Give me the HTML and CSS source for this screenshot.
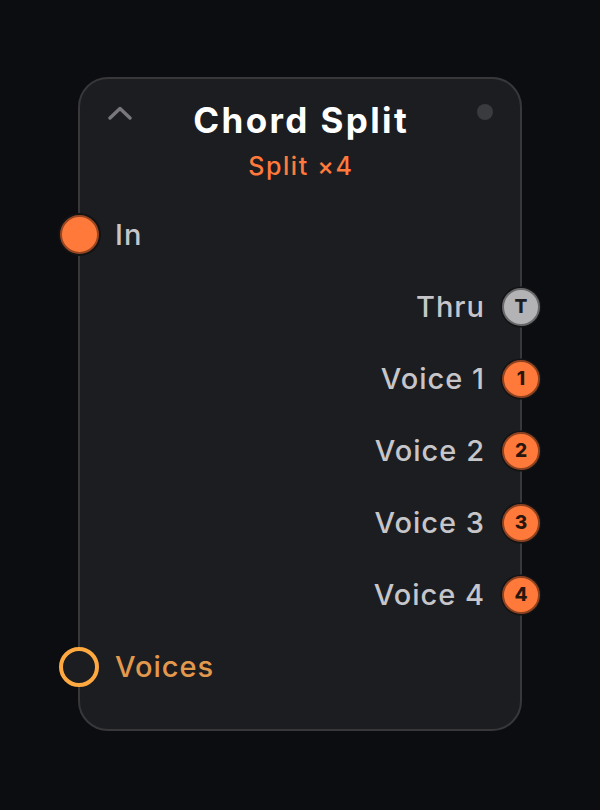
FILE: index.html
```html
<!DOCTYPE html>
<html>
<head>
<meta charset="utf-8">
<link rel="stylesheet" href="styles.css">
</head>
<body>
<div class="card">
  <div class="header">
    <div class="top">
      <svg class="chevron" viewBox="0 0 24 14" width="24" height="14"><polyline points="2,12 12,2.5 22,12" fill="none" stroke="#78787c" stroke-width="3.4" stroke-linecap="round" stroke-linejoin="round"/></svg>
      <div class="title">Chord Split</div>
      <div class="dot"></div>
    </div>
    <div class="subtitle">Split ×4</div>
  </div>
  <div class="ports">
    <div class="row left"><span class="port in"></span><span class="label">In</span></div>
    <div class="row right"><span class="label">Thru</span><span class="port thru">T</span></div>
    <div class="row right"><span class="label">Voice 1</span><span class="port voice">1</span></div>
    <div class="row right"><span class="label">Voice 2</span><span class="port voice">2</span></div>
    <div class="row right"><span class="label">Voice 3</span><span class="port voice">3</span></div>
    <div class="row right"><span class="label">Voice 4</span><span class="port voice">4</span></div>
    <div class="row left"><span class="port hollow"></span><span class="label voices">Voices</span></div>
  </div>
</div>
</body>
</html>
```
FILE: styles.css
```css
html, body {
  margin: 0;
  padding: 0;
  background: #0c0d10;
}
body {
  width: 600px;
  height: 810px;
  padding: 77px 0 0 78px;
  box-sizing: border-box;
  font-family: Inter, "Noto Sans", sans-serif;
}
.card {
  box-sizing: border-box;
  width: 444px;
  height: 654px;
  background: #1c1d20;
  border: 2px solid #38383b;
  border-radius: 30px;
  padding-bottom: 26px;
}
.header {
  height: 119.5px;
  padding: 21px 26px 0 26px;
  box-sizing: border-box;
}
.top {
  display: grid;
  grid-template-columns: 1fr auto 1fr;
  align-items: start;
}
.chevron {
  justify-self: start;
  margin-top: 5.5px;
  margin-left: 2px;
  display: block;
}
.title {
  font-size: 35px;
  line-height: 40px;
  font-weight: 700;
  color: #ffffff;
  text-align: center;
  letter-spacing: 2.4px;
  margin-right: -2.4px;
}
.dot {
  justify-self: end;
  width: 16px;
  height: 16px;
  border-radius: 50%;
  background: #3a3b3f;
  margin-top: 4px;
  margin-right: 1px;
}
.subtitle {
  margin-top: 11px;
  font-size: 25px;
  line-height: 30px;
  font-weight: 500;
  color: #ff7a3c;
  text-align: center;
  letter-spacing: 1.6px;
  margin-right: -1.6px;
}
.row {
  position: relative;
  height: 72px;
  display: flex;
  align-items: center;
}
.row.left {
  padding-left: 35px;
}
.row.right {
  justify-content: flex-end;
  padding-right: 35px;
}
.label {
  font-size: 29px;
  font-weight: 500;
  color: #c6c6ca;
  letter-spacing: 1px;
}
.label.voices {
  color: #e3994d;
}
.port {
  position: absolute;
  top: 50%;
  width: 38px;
  height: 38px;
  margin-top: -19px;
  border-radius: 50%;
  box-sizing: border-box;
  display: flex;
  align-items: center;
  justify-content: center;
  font-weight: 800;
  font-size: 19px;
}
.left .port { left: -20px; }
.right .port { right: -20px; }
.port.in {
  width: 39px;
  height: 39px;
  margin-top: -19.5px;
  left: -20.5px;
  background: #ff7a3a;
  border: 2px solid #9a4620;
  box-shadow: 0 0 0 2px #121315;
}
.port.thru {
  background: #b3b3b6;
  border: 2px solid #69696c;
  color: #1e1e20;
  box-shadow: 0 0 0 1.5px #121315;
}
.port.voice {
  background: #ff7a3a;
  border: 2px solid #8e4220;
  color: #2a160c;
  box-shadow: 0 0 0 1.5px #121315;
}
.port.hollow {
  width: 40px;
  height: 40px;
  margin-top: -20px;
  left: -21px;
  background: #1c1d20;
  border: 4px solid #ffa940;
}
```
